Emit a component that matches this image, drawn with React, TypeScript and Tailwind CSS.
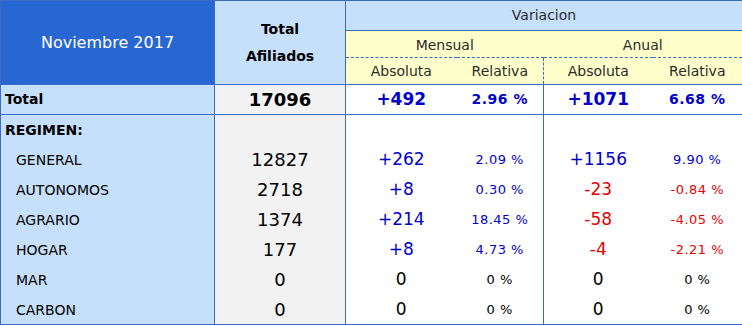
import React from 'react'

type Row = {
  label: string
  total: string
  mAbs: string
  mRel: string
  aAbs: string
  aRel: string
}

const rows: Row[] = [
  { label: 'GENERAL', total: '12827', mAbs: '+262', mRel: '2.09 %', aAbs: '+1156', aRel: '9.90 %' },
  { label: 'AUTONOMOS', total: '2718', mAbs: '+8', mRel: '0.30 %', aAbs: '-23', aRel: '-0.84 %' },
  { label: 'AGRARIO', total: '1374', mAbs: '+214', mRel: '18.45 %', aAbs: '-58', aRel: '-4.05 %' },
  { label: 'HOGAR', total: '177', mAbs: '+8', mRel: '4.73 %', aAbs: '-4', aRel: '-2.21 %' },
  { label: 'MAR', total: '0', mAbs: '0', mRel: '0 %', aAbs: '0', aRel: '0 %' },
  { label: 'CARBON', total: '0', mAbs: '0', mRel: '0 %', aAbs: '0', aRel: '0 %' },
]

// color by sign of the value (zero stays black)
function tone(v: string) {
  const n = parseFloat(v)
  if (n > 0) return 'text-[#0000cc]'
  if (n < 0) return 'text-[#e60000]'
  return 'text-black'
}

export default function App() {
  return (
    <div className="w-[742px] h-[326px] bg-white" style={{ fontFamily: '"DejaVu Sans", Verdana, sans-serif' }}>
      <table className="w-[742px] table-fixed border-collapse border border-[#3a6cc4]">
        <colgroup>
          <col className="w-[214px]" />
          <col className="w-[131px]" />
          <col className="w-[111px]" />
          <col className="w-[87px]" />
          <col className="w-[109px]" />
          <col className="w-[90px]" />
        </colgroup>
        <thead>
          <tr className="h-[30px]">
            <th rowSpan={3} className="bg-[#2866d1] text-white font-normal text-[16px] border border-[#3a6cc4]">
              Noviembre 2017
            </th>
            <th rowSpan={3} className="bg-[#c6e0fb] text-black font-bold text-[14px] leading-[27px] border border-[#3a6cc4]">
              Total
              <br />
              Afiliados
            </th>
            <th colSpan={4} className="bg-[#c6e0fb] text-[#2a2a2a] font-normal text-[14px] border border-[#3a6cc4]">
              Variacion
            </th>
          </tr>
          <tr className="h-[27px]">
            <th colSpan={2} className="bg-[#ffffcc] text-[#2a2a2a] font-normal text-[14px] pt-[2px] border-b border-dashed border-b-[#3a6cc4]">
              Mensual
            </th>
            <th colSpan={2} className="bg-[#ffffcc] text-[#2a2a2a] font-normal text-[14px] pt-[2px] border-b border-dashed border-b-[#3a6cc4]">
              Anual
            </th>
          </tr>
          <tr className="h-[27px] text-[14px] text-[#2a2a2a] font-normal">
            <th className="bg-[#ffffcc] font-normal">Absoluta</th>
            <th className="bg-[#ffffcc] font-normal border-r border-dashed border-r-[#3a6cc4]">Relativa</th>
            <th className="bg-[#ffffcc] font-normal">Absoluta</th>
            <th className="bg-[#ffffcc] font-normal">Relativa</th>
          </tr>
        </thead>
        <tbody>
          <tr className="h-[30px] border-t border-b border-[#3a6cc4]">
            <td className="bg-[#c6e0fb] pl-1 font-bold text-[14px] border-r border-[#3a6cc4]">Total</td>
            <td className="bg-[#f2f2f2] text-center font-bold text-[18px] border-r border-[#3a6cc4]">17096</td>
            <td className="text-center font-bold text-[17px] text-[#0000cc]">+492</td>
            <td className="text-center font-bold text-[14px] tracking-[0.5px] text-[#0000cc] border-r border-[#3a6cc4]">2.96 %</td>
            <td className="text-center font-bold text-[17px] text-[#0000cc]">+1071</td>
            <td className="text-center font-bold text-[14px] tracking-[0.5px] text-[#0000cc]">6.68 %</td>
          </tr>
          <tr className="h-[30px]">
            <td className="bg-[#c6e0fb] pl-1 pt-[2px] font-bold text-[14px] border-r border-[#3a6cc4]">REGIMEN:</td>
            <td className="bg-[#f2f2f2] border-r border-[#3a6cc4]"></td>
            <td></td>
            <td className="border-r border-[#3a6cc4]"></td>
            <td></td>
            <td></td>
          </tr>
          {rows.map((r) => (
            <tr key={r.label} className="h-[30px]">
              <td className="bg-[#c6e0fb] pl-[15px] pt-[2px] text-[14px] text-black border-r border-[#3a6cc4]">{r.label}</td>
              <td className="bg-[#f2f2f2] text-center text-[18px] text-black border-r border-[#3a6cc4]">{r.total}</td>
              <td className={`text-center text-[17px] ${tone(r.mAbs)}`}>{r.mAbs}</td>
              <td className={`text-center text-[13px] tracking-[0.5px] border-r border-[#3a6cc4] ${tone(r.mRel)}`}>{r.mRel}</td>
              <td className={`text-center text-[17px] ${tone(r.aAbs)}`}>{r.aAbs}</td>
              <td className={`text-center text-[13px] tracking-[0.5px] ${tone(r.aRel)}`}>{r.aRel}</td>
            </tr>
          ))}
        </tbody>
      </table>
    </div>
  )
}
